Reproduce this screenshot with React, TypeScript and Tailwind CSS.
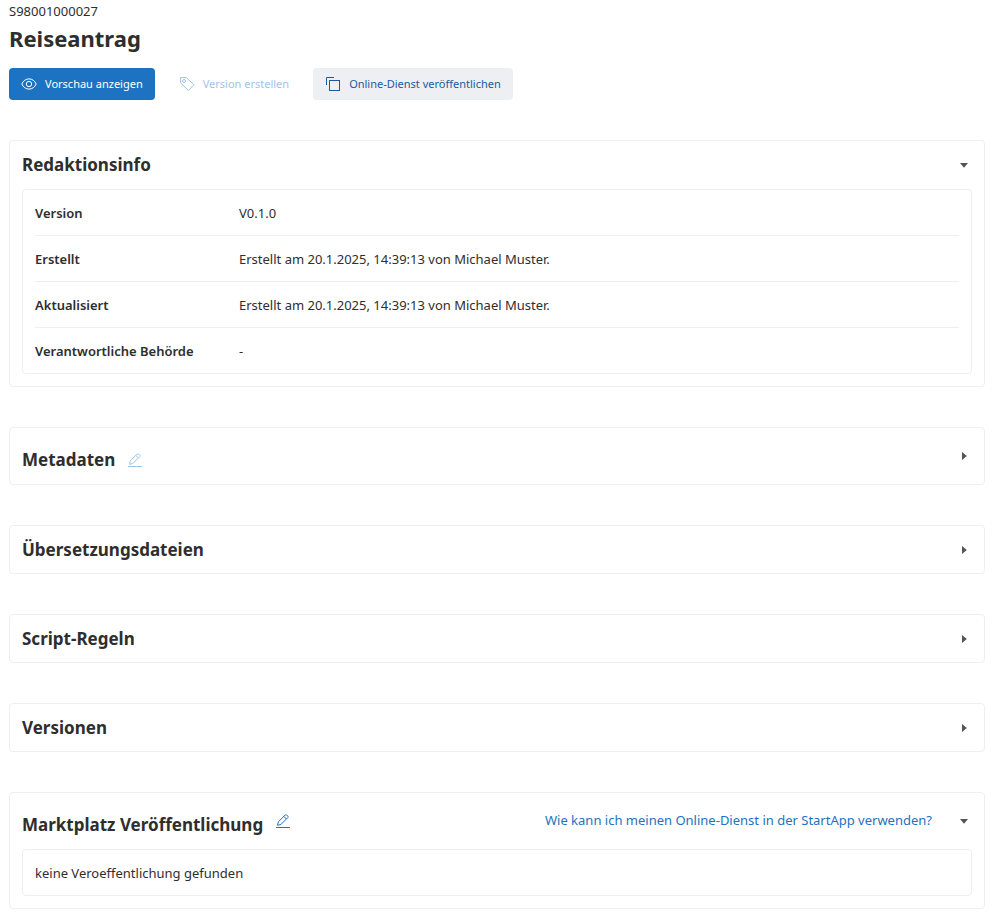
import { useState } from "react";
import type { ReactNode } from "react";

function EyeIcon() {
  return (
    <svg width="16" height="16" viewBox="0 0 16 16" fill="none" stroke="currentColor" strokeWidth="1" aria-hidden="true">
      <path d="M0.8 8C2.3 4.7 4.9 2.9 8 2.9S13.7 4.7 15.2 8C13.7 11.3 11.1 13.1 8 13.1S2.3 11.3 0.8 8Z" />
      <circle cx="8" cy="8" r="2.7" />
    </svg>
  );
}

function TagIcon() {
  return (
    <svg width="16" height="16" viewBox="0 0 16 16" fill="none" stroke="currentColor" strokeWidth="1" strokeLinejoin="round" aria-hidden="true">
      <path d="M1.5 1.5H7.2L14.6 8.4Q15 8.8 14.6 9.2L9.8 14.2Q9.4 14.6 9 14.2L1.5 6.8Z" />
      <circle cx="5" cy="5" r="1.5" />
    </svg>
  );
}

function CopyIcon() {
  return (
    <svg width="16" height="16" viewBox="0 0 16 16" fill="none" stroke="currentColor" strokeWidth="1" aria-hidden="true">
      <path d="M1.5 9V1.5H9" />
      <rect x="4.5" y="4.5" width="10" height="10" />
    </svg>
  );
}

function EditIcon() {
  return (
    <svg width="16" height="16" viewBox="0 0 16 16" fill="none" stroke="currentColor" strokeWidth="1" strokeLinejoin="round" aria-hidden="true">
      <path d="M1 14.5H15" />
      <path d="M2.5 12.3L3.3 8.9L10.3 1.9Q10.9 1.3 11.5 1.9L12.9 3.3Q13.5 3.9 12.9 4.5L5.9 11.5Z" />
      <path d="M8.8 3.4L11.4 6" />
    </svg>
  );
}

function Caret({ open }: { open: boolean }) {
  return (
    <svg width="16" height="16" viewBox="0 0 16 16" fill="#555555" aria-hidden="true">
      {open ? <path d="M4 6H12L8 10.8Z" /> : <path d="M6 4L10.8 8L6 12Z" />}
    </svg>
  );
}

type PanelProps = {
  title: string;
  defaultOpen?: boolean;
  action?: ReactNode;
  extra?: ReactNode;
  tall?: boolean;
  children?: ReactNode;
};

function Panel({ title, defaultOpen = false, action, extra, tall = false, children }: PanelProps) {
  const [open, setOpen] = useState(defaultOpen);
  const height = tall ? "h-14" : open ? "h-12" : "h-[47px]";
  return (
    <section className="rounded border border-[#eeeff3] px-3">
      <div className={`flex items-center justify-between ${height}`}>
        <div className={`flex items-center gap-3 ${tall ? "pt-2" : ""}`}>
          <h2 className="text-[17px] leading-6 font-bold">{title}</h2>
          {action}
        </div>
        <div className="flex items-center gap-6">
          {extra}
          <button type="button" aria-expanded={open} aria-label={title} onClick={() => setOpen(!open)}>
            <Caret open={open} />
          </button>
        </div>
      </div>
      {open && children ? <div className="mb-3 rounded border border-[#eeeff3] px-3">{children}</div> : null}
    </section>
  );
}

const info = [
  ["Version", "V0.1.0"],
  ["Erstellt", "Erstellt am 20.1.2025, 14:39:13 von Michael Muster."],
  ["Aktualisiert", "Erstellt am 20.1.2025, 14:39:13 von Michael Muster."],
  ["Verantwortliche Behörde", "-"],
];

export default function App() {
  return (
    <main className="bg-white pr-[10px] pb-2 pl-[9px] font-['Noto_Sans','Open_Sans',sans-serif] text-[13px] text-[#2e2e2e]">
      <p className="pt-px leading-5">S98001000027</p>
      <h1 className="text-[22px] leading-[34px] font-bold">Reiseantrag</h1>
      <div className="mt-[13px] flex gap-3 text-[11px]">
        <button type="button" className="flex h-8 items-center gap-2 rounded bg-[#1d72c1] px-3 text-white">
          <EyeIcon />
          Vorschau anzeigen
        </button>
        <button type="button" disabled className="flex h-8 items-center gap-2 rounded px-3 text-[#a0c4e6]">
          <TagIcon />
          Version erstellen
        </button>
        <button type="button" className="flex h-8 items-center gap-2 rounded bg-[#eeeff3] px-3 text-[#175c9e]">
          <CopyIcon />
          Online-Dienst veröffentlichen
        </button>
      </div>

      <div className="mt-10 flex flex-col gap-10">
        <Panel title="Redaktionsinfo" defaultOpen>
          <table className="w-full border-separate border-spacing-0">
            <tbody>
              {info.map(([label, value]) => (
                <tr key={label} className="group">
                  <th
                    scope="row"
                    className="w-[204px] border-b border-[#eeeff0] pt-[13px] pb-3 text-left leading-5 font-semibold group-last:border-b-0"
                  >
                    {label}
                  </th>
                  <td className="border-b border-[#eeeff0] pt-[13px] pb-3 leading-5 group-last:border-b-0">{value}</td>
                </tr>
              ))}
            </tbody>
          </table>
        </Panel>
        <Panel
          title="Metadaten"
          tall
          action={
            <button type="button" disabled aria-label="Metadaten bearbeiten" className="text-[#a0c4e6]">
              <EditIcon />
            </button>
          }
        />
        <Panel title="Übersetzungsdateien" />
        <Panel title="Script-Regeln" />
        <Panel title="Versionen" />
        <Panel
          title="Marktplatz Veröffentlichung"
          tall
          defaultOpen
          action={
            <button type="button" aria-label="Marktplatz Veröffentlichung bearbeiten" className="pb-2 text-[#1d72c1]">
              <EditIcon />
            </button>
          }
          extra={
            <a href="#hilfe" className="text-[#1d72c1]">
              Wie kann ich meinen Online-Dienst in der StartApp verwenden?
            </a>
          }
        >
          <p className="pt-[13px] pb-3 leading-5">keine Veroeffentlichung gefunden</p>
        </Panel>
      </div>
    </main>
  );
}
